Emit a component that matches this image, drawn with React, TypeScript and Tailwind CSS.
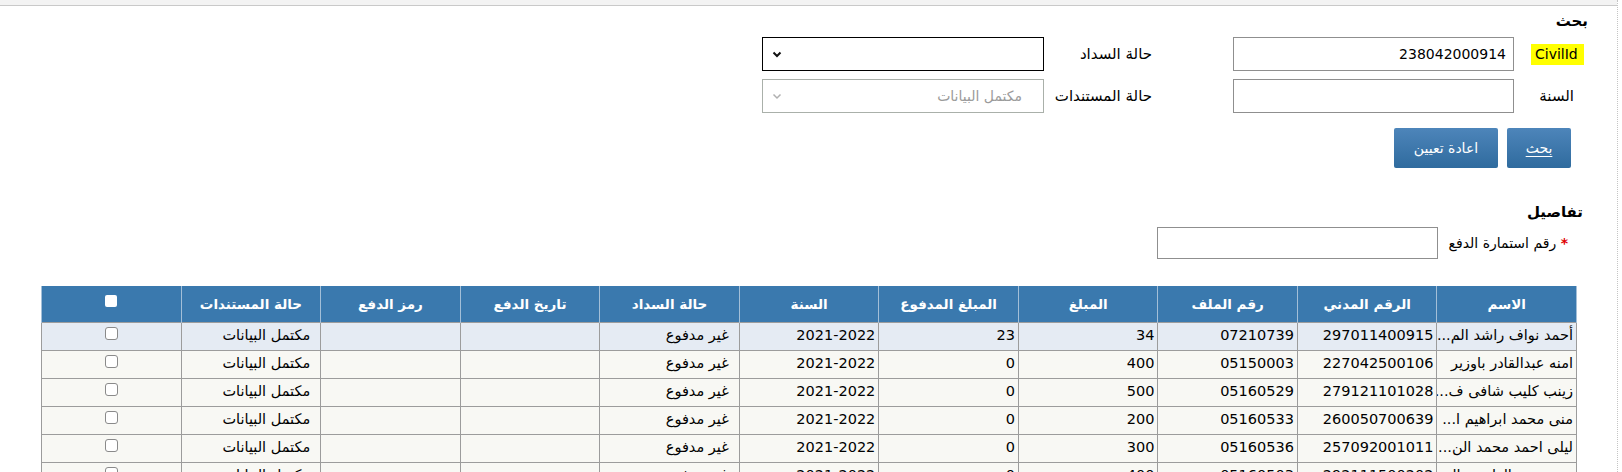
const rows = [
  { name: 'أحمد نواف راشد الم...', civil: '297011400915', file: '07210739', amount: '34', paid: '23' },
  { name: 'امنه عبدالقادر باوزير', civil: '227042500106', file: '05150003', amount: '400', paid: '0' },
  { name: 'زينب كليب شافى ف...', civil: '279121101028', file: '05160529', amount: '500', paid: '0' },
  { name: 'منى محمد ابراهيم ا...', civil: '260050700639', file: '05160533', amount: '200', paid: '0' },
  { name: 'ليلى احمد محمد الن...', civil: '257092001011', file: '05160536', amount: '300', paid: '0' },
  { name: 'نوره سعد العازمي ال...', civil: '292111500202', file: '05160503', amount: '400', paid: '0' },
]

const headers = [
  'الاسم',
  'الرقم المدني',
  'رقم الملف',
  'المبلغ',
  'المبلغ المدفوع',
  'السنة',
  'حالة السداد',
  'تاريخ الدفع',
  'رمز الدفع',
  'حالة المستندات',
]

function Chevron({ color, width }: { color: string; width: number }) {
  return (
    <svg width="10" height="7" viewBox="0 0 10 7" className="shrink-0">
      <path d="M1.5 1.5 L5 5 L8.5 1.5" fill="none" stroke={color} strokeWidth={width} />
    </svg>
  )
}

function Box({ header }: { header?: boolean }) {
  return header ? (
    <span className="inline-block h-[12px] w-[12px] rounded-[2px] bg-white" />
  ) : (
    <span className="inline-block h-[13px] w-[13px] rounded-[3px] border border-[#8a8a8a] bg-white" />
  )
}

export default function App() {
  const cell = 'h-[28px] border border-[#9c9c9c] whitespace-nowrap overflow-hidden align-middle'
  const td = `${cell} text-right`

  return (
    <div className="h-[472px] w-[1622px] overflow-hidden bg-white font-['DejaVu_Sans',sans-serif] text-black">
      <div className="h-[472px] w-[1618px] border-r border-dotted border-[#c4c4c4]">
        <div className="h-[6px] border-b border-[#c9c9c9] bg-[#f3f3f3]" />

        <div dir="rtl" className="pr-[29px]">
          {/* search */}
          <h2 className="mt-[6px] text-[15px] font-bold leading-[18px]">بحث</h2>

          <div className="mt-[7px] flex flex-col gap-[8px] text-[15px]">
            <div className="flex items-center">
              <div className="w-[74px]">
                <span className="mr-[4px] inline-block w-[53px] bg-[#ffff00] py-[2px] pl-[4px] text-left text-[14px] leading-[17px]">
                  CivilId
                </span>
              </div>
              <div className="flex h-[34px] w-[281px] items-center border border-[#8f8f8f] pr-[7px] text-[14px]">
                238042000914
              </div>
              <div className="mr-[81px] w-[108px]">حالة السداد</div>
              <div className="flex h-[34px] w-[282px] items-center justify-between border border-black pl-[9px]">
                <span />
                <Chevron color="#111" width={2} />
              </div>
            </div>

            <div className="flex items-center">
              <div className="w-[74px] pr-[14px]">السنة</div>
              <div className="h-[34px] w-[281px] border border-[#8f8f8f]" />
              <div className="mr-[81px] w-[108px]">حالة المستندات</div>
              <div className="flex h-[34px] w-[282px] items-center justify-between border border-[#aab0aa] pl-[9px] pr-[21px] text-[14px] text-[#9b9b9b]">
                <span>مكتمل البيانات</span>
                <Chevron color="#b0b0b0" width={1.5} />
              </div>
            </div>
          </div>

          <div className="mr-[17px] mt-[15px] flex gap-[9px] text-[14px] text-white">
            <button className="h-[40px] w-[64px] rounded-[2px] bg-gradient-to-b from-[#4d85ba] to-[#2f6b9e] underline underline-offset-[3px]">
              بحث
            </button>
            <button className="h-[40px] w-[104px] rounded-[2px] bg-gradient-to-b from-[#4d85ba] to-[#2f6b9e]">
              اعادة تعيين
            </button>
          </div>

          {/* details */}
          <h2 className="mt-[35px] pr-[5px] text-[15px] font-bold leading-[18px]">تفاصيل</h2>
          <div className="mt-[6px] flex items-center text-[14px]">
            <div className="w-[150px] pr-[20px]">
              <span className="font-bold text-[#e00000]">*</span> رقم استمارة الدفع
            </div>
            <div className="h-[32px] w-[281px] border border-[#8f8f8f]" />
          </div>
        </div>

        {/* table */}
        <div dir="rtl" className="mt-[27px] pr-[40px]">
          <table className="w-[1536px] table-fixed border-collapse text-[14.5px]">
            <thead>
              <tr className="bg-[#3a79ae] text-white">
                {headers.map((h) => (
                  <th key={h} className="h-[36px] border-x border-[#a3bfd8] text-center text-[13.5px] font-bold">
                    {h}
                  </th>
                ))}
                <th className="h-[36px] border-x border-[#a3bfd8] pt-[9px] text-center align-top leading-none">
                  <Box header />
                </th>
              </tr>
            </thead>
            <tbody>
              {rows.map((r, i) => (
                <tr key={r.civil} className={i === 0 ? 'bg-[#e5ebf3]' : 'bg-[#f8f8f4]'}>
                  <td className={`${td} pr-[3px]`}>{r.name}</td>
                  <td className={`${td} pr-[3px]`}>{r.civil}</td>
                  <td className={`${td} pr-[3px]`}>{r.file}</td>
                  <td className={`${td} pr-[3px]`}>{r.amount}</td>
                  <td className={`${td} pr-[3px]`}>{r.paid}</td>
                  <td className={`${td} pr-[3px]`}>2021-2022</td>
                  <td className={`${td} pr-[10px]`}>غير مدفوع</td>
                  <td className={td} />
                  <td className={td} />
                  <td className={`${td} pr-[10px]`}>مكتمل البيانات</td>
                  <td className="h-[28px] border border-[#9c9c9c] pt-[4px] text-center align-top leading-none">
                    <Box />
                  </td>
                </tr>
              ))}
            </tbody>
          </table>
        </div>
      </div>
    </div>
  )
}
